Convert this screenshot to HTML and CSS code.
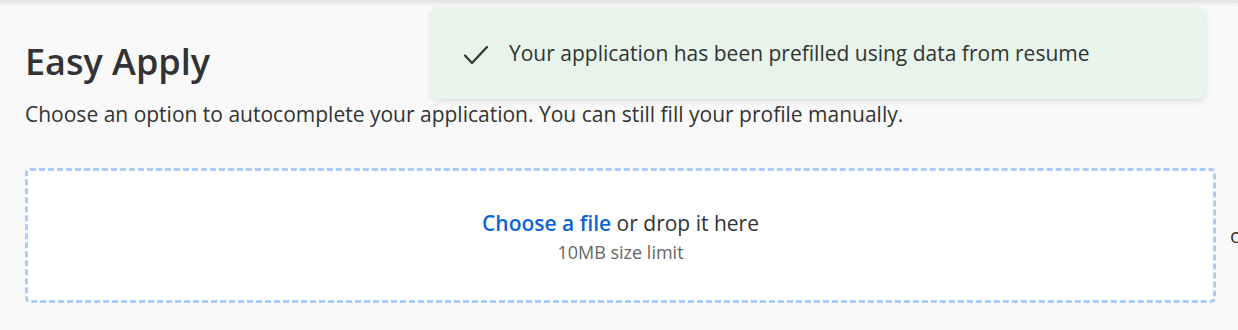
FILE: index.html
```html
<!DOCTYPE html>
<html lang="en">
<head>
    <meta charset="UTF-8">
    <title>Easy Apply</title>
    <link rel="stylesheet" href="styles.css">
</head>
<body>
    <div class="topbar"></div>

    <main class="page">
        <h1>Easy Apply</h1>
        <p class="intro">Choose an option to autocomplete your application. You can still fill your profile manually.</p>

        <div class="upload-row">
            <div class="dropzone">
                <div class="drop-line"><a href="#" class="choose">Choose a file</a> or drop it here</div>
                <div class="drop-limit">10MB size limit</div>
            </div>
            <span class="alt-option">or</span>
        </div>
    </main>

    <div class="toast">
        <svg class="toast-icon" width="26" height="22" viewBox="0 0 26 22">
            <path d="M2 11.5 L9 19 L24 3" fill="none" stroke="#333" stroke-width="2.2" stroke-linecap="round" stroke-linejoin="round"/>
        </svg>
        <span>Your application has been prefilled using data from resume</span>
    </div>
</body>
</html>
```

FILE: styles.css
```css
html, body {
    margin: 0;
    padding: 0;
}
body {
    font-family: 'Open Sans', 'Liberation Sans', sans-serif;
    background: #f9f9f9;
    color: #333;
    height: 330px;
    overflow: hidden;
}
.topbar {
    height: 3px;
    background: #e6e6e6;
    box-shadow: 0 1px 4px rgba(0, 0, 0, 0.08);
}
.page {
    padding: 0 22px 0 25px;
}
h1 {
    margin: 0;
    padding-top: 35px;
    font-size: 36px;
    font-weight: 600;
    line-height: 48px;
    color: #333;
}
.intro {
    margin: 14px 0 0;
    font-size: 21px;
    line-height: 28px;
    color: #333;
}
.upload-row {
    display: flex;
    align-items: center;
    gap: 14px;
    margin-top: 40px;
}
.dropzone {
    flex: 0 0 1191px;
    box-sizing: border-box;
    height: 135px;
    background: #fff;
    border: 3px dashed #abcbf8;
    border-radius: 5px;
    display: flex;
    flex-direction: column;
    align-items: center;
    justify-content: center;
    padding-top: 2px;
}
.drop-line {
    font-size: 21px;
    line-height: 28px;
    color: #333;
}
.choose {
    color: #0a66d8;
    font-weight: 600;
    text-decoration: none;
}
.drop-limit {
    font-size: 18px;
    line-height: 24px;
    color: #666;
    margin-top: 3px;
}
.alt-option {
    font-size: 20px;
    color: #333;
    white-space: nowrap;
}
.toast {
    position: absolute;
    top: 8px;
    left: 431px;
    width: 774px;
    height: 91px;
    box-sizing: border-box;
    background: #e6f4ea;
    border-radius: 6px;
    box-shadow: 0 2px 6px rgba(0, 0, 0, 0.12);
    display: flex;
    align-items: center;
    padding-left: 32px;
    padding-bottom: 2px;
    font-size: 21px;
    color: #333;
}
.toast-icon {
    margin-right: 20px;
    margin-top: 4px;
}
```
